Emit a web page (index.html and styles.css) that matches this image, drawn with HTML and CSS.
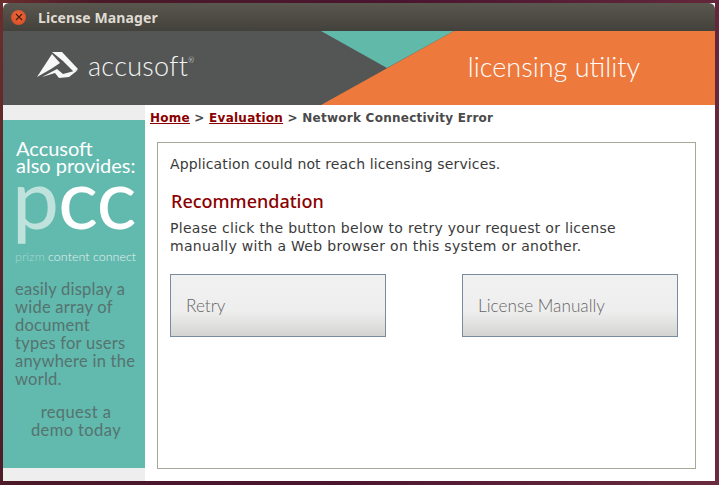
FILE: index.html
```html
<!DOCTYPE html>
<html lang="en">
<head>
<meta charset="utf-8">
<title>License Manager</title>
<link rel="stylesheet" href="styles.css">
</head>
<body>
<div class="window">
  <div class="titlebar">
    <span class="close"><svg width="8" height="8" viewBox="0 0 8 8"><path d="M1 1L7 7M7 1L1 7" stroke="#4a1a0c" stroke-width="1.2"/></svg></span>
    <span class="title">License Manager</span>
  </div>
  <header class="banner">
    <svg class="banner-bg" width="712" height="74" viewBox="0 0 712 74">
      <polygon points="318,0 451,0 384,37" fill="#60b9a9"/>
      <polygon points="451,0 712,0 712,74 318,74" fill="#ee793c"/>
    </svg>
    <div class="logo">
      <svg class="logo-mark" width="42" height="27" viewBox="0 0 42 27">
        <path d="M15 0H25L41 17L37 20L26 9L15 0Z" fill="#f6f7f6"/>
        <path d="M15 2L23 11L14 17L0 25L15 2Z" fill="#f6f7f6"/>
        <path d="M5 25L20 17L26 22L41 18L32 25L22 26L18 21L5 25Z" fill="#f6f7f6"/>
      </svg>
      <span class="logo-text">accusoft<sup class="reg">®</sup></span>
    </div>
    <div class="utility">licensing utility</div>
  </header>
  <div class="body">
    <aside class="side">
      <div class="side-panel">
        <h2 class="side-title">Accusoft<br>also provides:</h2>
        <div class="pcc"><span class="pcc-p">p</span>cc</div>
        <div class="prizm"><span class="prizm-dim">prizm</span> content connect</div>
        <p class="side-copy">easily display a<br>wide array of<br>document<br>types for users<br>anywhere in the<br>world.</p>
        <p class="side-cta">request a<br>demo today</p>
      </div>
    </aside>
    <main class="main">
      <nav class="crumbs"><a href="#">Home</a> &gt; <a href="#">Evaluation</a> &gt; Network Connectivity Error</nav>
      <section class="box">
        <p class="msg">Application could not reach licensing services.</p>
        <h3 class="rec">Recommendation</h3>
        <p class="desc">Please click the button below to retry your request or license<br>manually with a Web browser on this system or another.</p>
        <div class="actions">
          <button class="btn">Retry</button>
          <button class="btn">License Manually</button>
        </div>
      </section>
    </main>
  </div>
</div>
</body>
</html>
```
FILE: styles.css
```css
* { box-sizing: border-box; }
html, body { margin: 0; height: 100%; }
body {
  width: 719px;
  height: 485px;
  overflow: hidden;
  padding: 3px 4px 4px 3px;
  background: linear-gradient(100deg, #6a2e2c 0%, #4a1a28 12%, #4a1530 50%, #6a2c3e 100%);
}
.window { width: 712px; height: 478px; display: flex; flex-direction: column; background: #fff; }
.titlebar {
  height: 28px;
  flex: none;
  display: flex;
  align-items: center;
  padding-left: 8px;
  border-radius: 6px 6px 0 0;
  background: linear-gradient(#5a574f, #43413b);
}
.close {
  width: 15px; height: 15px; border-radius: 50%;
  background: radial-gradient(circle at 50% 40%, #ee6a3c, #d6471f);
  display: flex; align-items: center; justify-content: center;
}
.title {
  margin-left: 12px;
  font: bold 14px "Noto Sans", "Liberation Sans", sans-serif;
  letter-spacing: .1px;
  color: #dfdbd2;
}
.banner {
  position: relative;
  height: 74px;
  flex: none;
  background: #545655;
  display: flex;
  align-items: center;
  justify-content: space-between;
}
.banner-bg { position: absolute; left: 0; top: 0; }
.logo { position: relative; display: flex; align-items: center; margin-left: 34px; margin-top: -5px; }
.logo-text { font: 300 27px "Lato", sans-serif; color: #f2f3f2; margin-left: 9px; letter-spacing: .3px; }
.reg { font-size: 7px; vertical-align: 13px; line-height: 0; }
.utility { position: relative; font: 300 27px "Lato", sans-serif; color: #fff; margin: -4px 75px 0 0; }
.body { flex: 1; display: flex; min-height: 0; }
.side { width: 142px; flex: none; background: #eeeeee; padding: 15px 0 13px; display: flex; }
.side-panel { flex: 1; min-width: 0; background: #62b9ae; padding: 20px 8px 0 12px; }
.side-title { margin: 0 0 0 1px; font: 400 20px/17px "Lato", sans-serif; color: #fff; }
.pcc { font: 400 84px/60px "Lato", sans-serif; color: #fff; margin: -7px 0 0 -3px; height: 60px; letter-spacing: -1px; white-space: nowrap; }
.pcc-p { color: #bfe3dc; }
.prizm { font: 300 12.5px/16px "Lato", sans-serif; color: #e2f2ef; margin-top: 22px; white-space: nowrap; }
.prizm-dim { color: #a4d8ce; }
.side-copy { margin: 15px 0 0; font: 400 16.5px/18px "Lato", sans-serif; letter-spacing: .25px; color: #55736f; }
.side-cta { margin: 15px 0 0; font: 400 16.5px/18px "Lato", sans-serif; letter-spacing: .4px; color: #55736f; text-align: center; }
.main { flex: 1; display: flex; flex-direction: column; padding: 0 0 0 5px; }
.crumbs {
  font: bold 12px/15px "DejaVu Sans", sans-serif;
  color: #4a4a4a;
  padding-top: 6px;
  letter-spacing: .25px;
}
.crumbs a { color: #8b0000; }
.box {
  margin: 16px 19px 12px 7px;
  flex: 1;
  border: 1px solid #a8a898;
  padding: 13px 12px;
}
.msg { margin: 0; font: 14px/17px "DejaVu Sans", sans-serif; letter-spacing: .13px; color: #3a3a3a; }
.rec { margin: 18px 0 0 1px; font: 500 18px/21px "Noto Sans", "DejaVu Sans", sans-serif; color: #8b0000; }
.desc { margin: 7px 0 0; font: 14px/18px "DejaVu Sans", sans-serif; letter-spacing: .3px; color: #3a3a3a; }
.actions { display: flex; justify-content: space-between; margin-top: 19px; padding-right: 5px; }
.btn {
  width: 216px; height: 63px;
  border: 1px solid #7a8ba0;
  background: linear-gradient(#f1f1f1 0%, #eeeeee 60%, #d4d4d2 100%);
  text-align: left;
  padding: 0 15px;
  font: 300 17.2px "Lato", sans-serif;
  color: #666;
}
```
